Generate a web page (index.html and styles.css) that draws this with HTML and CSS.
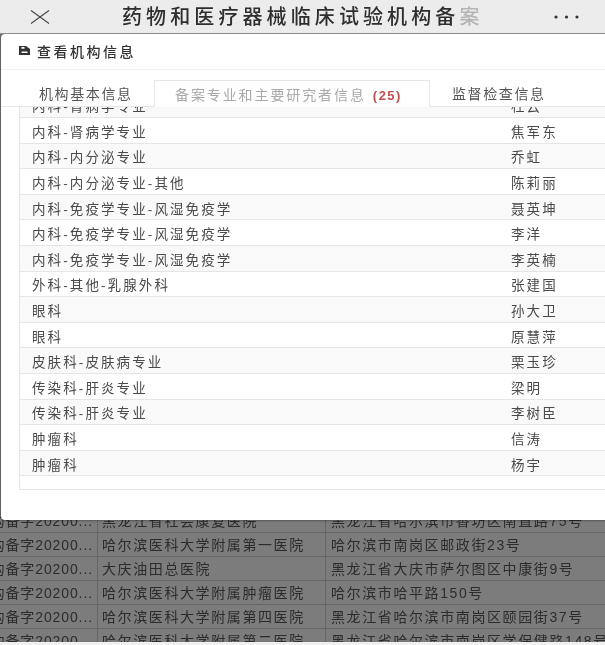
FILE: index.html
```html
<!DOCTYPE html>
<html lang="zh-CN">
<head>
<meta charset="utf-8">
<title>药物和医疗器械临床试验机构备案</title>
<link rel="stylesheet" href="styles.css">
</head>
<body>
<div class="screen">
  <header class="topbar">
    <svg class="close-icon" width="20" height="14" viewBox="0 0 20 14"><path d="M1 .5 L19 13.5 M19 .5 L1 13.5" fill="none" stroke="#444" stroke-width="1.1"/></svg>
    <h1 class="app-title">药物和医疗器械临床试验机构备<span class="fade">案</span></h1>
    <svg class="more-icon" width="25" height="4" viewBox="0 0 25 4"><circle cx="2" cy="2" r="1.6" fill="#333"/><circle cx="12.5" cy="2" r="1.6" fill="#333"/><circle cx="23" cy="2" r="1.6" fill="#333"/></svg>
  </header>
  <main class="stage">
    <div class="back-table">
      <div class="back-row"><div class="c1"><span>机构备字20200...</span></div><div class="c2">黑龙江省社会康复医院</div><div class="c3">黑龙江省哈尔滨市香坊区南直路75号</div></div>
      <div class="back-row"><div class="c1"><span>机构备字20200...</span></div><div class="c2">哈尔滨医科大学附属第一医院</div><div class="c3">哈尔滨市南岗区邮政街23号</div></div>
      <div class="back-row"><div class="c1"><span>机构备字20200...</span></div><div class="c2">大庆油田总医院</div><div class="c3">黑龙江省大庆市萨尔图区中康街9号</div></div>
      <div class="back-row"><div class="c1"><span>机构备字20200...</span></div><div class="c2">哈尔滨医科大学附属肿瘤医院</div><div class="c3">哈尔滨市哈平路150号</div></div>
      <div class="back-row"><div class="c1"><span>机构备字20200...</span></div><div class="c2">哈尔滨医科大学附属第四医院</div><div class="c3">黑龙江省哈尔滨市南岗区颐园街37号</div></div>
      <div class="back-row"><div class="c1"><span>机构备字20200...</span></div><div class="c2">哈尔滨医科大学附属第二医院</div><div class="c3">黑龙江省哈尔滨市南岗区学保健路148号</div></div>
    </div>
    <section class="dialog">
      <div class="dialog-head">
        <svg class="doc-icon" width="11" height="9" viewBox="0 0 11 9"><path d="M0 0 H7 L11 3 V9 H0 Z" fill="#333"/><path d="M2.5 1 H5.5 V2.8 H2.5 Z M2.5 5.6 H8.5 V7 H2.5 Z" fill="#fff"/></svg>
        <span class="dialog-title">查看机构信息</span>
      </div>
      <nav class="tabs">
        <div class="tab tab-first">机构基本信息</div>
        <div class="tab tab-active">备案专业和主要研究者信息<b class="count">(25)</b></div>
        <div class="tab tab-last">监督检查信息</div>
      </nav>
      <div class="list-clip">
        <div class="list">
          <div class="row"><span class="major">内科-肾病学专业</span><span class="name">杜云</span></div>
          <div class="row"><span class="major">内科-肾病学专业</span><span class="name">焦军东</span></div>
          <div class="row"><span class="major">内科-内分泌专业</span><span class="name">乔虹</span></div>
          <div class="row"><span class="major">内科-内分泌专业-其他</span><span class="name">陈莉丽</span></div>
          <div class="row"><span class="major">内科-免疫学专业-风湿免疫学</span><span class="name">聂英坤</span></div>
          <div class="row"><span class="major">内科-免疫学专业-风湿免疫学</span><span class="name">李洋</span></div>
          <div class="row"><span class="major">内科-免疫学专业-风湿免疫学</span><span class="name">李英楠</span></div>
          <div class="row"><span class="major">外科-其他-乳腺外科</span><span class="name">张建国</span></div>
          <div class="row"><span class="major">眼科</span><span class="name">孙大卫</span></div>
          <div class="row"><span class="major">眼科</span><span class="name">原慧萍</span></div>
          <div class="row"><span class="major">皮肤科-皮肤病专业</span><span class="name">栗玉珍</span></div>
          <div class="row"><span class="major">传染科-肝炎专业</span><span class="name">梁明</span></div>
          <div class="row"><span class="major">传染科-肝炎专业</span><span class="name">李树臣</span></div>
          <div class="row"><span class="major">肿瘤科</span><span class="name">信涛</span></div>
          <div class="row"><span class="major">肿瘤科</span><span class="name">杨宇</span></div>
          <div class="row-empty"></div>
        </div>
      </div>
    </section>
  </main>
  <div class="bottom-strip"></div>
</div>
</body>
</html>
```
FILE: styles.css
```css
* { box-sizing: border-box; }
html, body { margin: 0; padding: 0; background: #f0f0f0; }
body { font-family: "Liberation Sans", "Noto Sans CJK SC", sans-serif; overflow: hidden; }
.screen { width: 605px; height: 645px; display: flex; flex-direction: column; overflow: hidden; filter: blur(0.35px); }
.topbar { height: 34px; flex: none; background: #ececec; display: flex; align-items: center; padding: 1px 0 0 30px; border-bottom: 1px solid #8c8c8c; }
.close-icon { flex: none; }
.app-title { margin: 0 0 0 72px; width: 362px; flex: none; font-size: 20px; line-height: 24px; font-weight: 500; letter-spacing: 4.1px; color: #2e2e2e; white-space: nowrap; }
.fade { color: #b5b5b5; }
.more-icon { flex: none; margin-left: 70px; }
.stage { position: relative; flex: none; height: 608px; background: #7c7c7c; overflow: hidden; }
.back-table { padding-top: 475px; }
.back-row { height: 24px; display: flex; border-bottom: 1px solid #666; font-size: 14px; line-height: 24px; color: #2c2c2c; white-space: nowrap; letter-spacing: 1.6px; }
.c1 { width: 98px; flex: none; display: flex; justify-content: flex-end; overflow: hidden; padding-right: 4px; border-right: 1px solid #666; letter-spacing: 0.9px; }
.c2 { width: 228px; flex: none; padding-left: 4px; border-right: 1px solid #666; }
.c3 { flex: 1; padding-left: 5px; }
.dialog { position: absolute; left: 1px; top: 0; width: 640px; height: 486px; background: #fff; border-radius: 4px; box-shadow: 0 0 3px rgba(0,0,0,.6); display: flex; flex-direction: column; }
.dialog-head { height: 36px; flex: none; display: flex; align-items: center; gap: 7px; padding: 0 0 2px 18px; border-bottom: 1px solid #f0f0f0; }
.dialog-title { font-size: 14px; font-weight: 500; letter-spacing: 2.5px; color: #333; }
.tabs { height: 37px; flex: none; display: flex; align-items: flex-end; border-bottom: 1px solid #e6e6e6; font-size: 14px; color: #555; letter-spacing: 1.6px; }
.tab { height: 27px; line-height: 28px; margin-bottom: -1px; white-space: nowrap; }
.tab-first { width: 153px; padding-left: 38px; }
.tab-active { width: 276px; padding-left: 20px; background: #fff; border: 1px solid #e6e6e6; border-bottom-color: #fff; color: #a8a8a8; letter-spacing: 1.9px; }
.tab-last { padding-left: 22px; }
.count { color: #c0504d; margin-left: 7px; font-size: 13px; letter-spacing: 1.5px; }
.list-clip { flex: none; height: 384px; overflow: hidden; }
.list { margin: -14.6px 0 0 18px; border-left: 1px solid #e6e6e6; }
.row { height: 25.6px; display: flex; align-items: center; border-bottom: 1px solid #e6e6e6; font-size: 13.5px; color: #4a4a4a; letter-spacing: 2.1px; white-space: nowrap; padding: 1px 0 0 12px; }
.row:nth-child(odd) { background: #f9f9f9; }
.major { width: 479px; flex: none; }
.row-empty { height: 14px; border-bottom: 1px solid #e6e6e6; }
.bottom-strip { flex: none; height: 3px; background: #f0f0f0; }
```
